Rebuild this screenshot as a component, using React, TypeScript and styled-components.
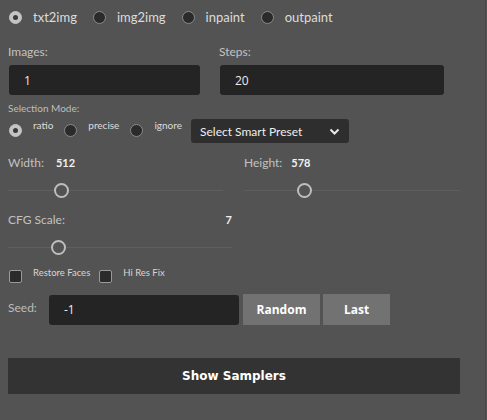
import React from 'react';
import styled, { createGlobalStyle } from 'styled-components';

const Global = createGlobalStyle`
  html, body {
    margin: 0;
    padding: 0;
    background: #535353;
  }
  body {
    font-family: 'Lato', 'Noto Sans', sans-serif;
    color: #d6d6d6;
  }
`;

const Styles = {
  Panel: styled.div`
    width: 486px;
    height: 420px;
    box-sizing: border-box;
    border-right: 1px solid #4a4a4a;
    padding: 0 8px;
    display: flex;
    flex-direction: column;
  `,
  ModeRow: styled.div`
    display: flex;
    align-items: center;
    height: 34px;
    gap: 16px;
    padding-left: 1px;
  `,
  RadioItem: styled.label<{ $small?: boolean }>`
    display: flex;
    align-items: ${(p) => (p.$small ? 'flex-start' : 'center')};
    gap: 11px;
    font-size: ${(p) => (p.$small ? '10px' : '13px')};
    color: #dcdcdc;
  `,
  Radio: styled.span<{ $checked?: boolean; $small?: boolean }>`
    width: 13px;
    height: 13px;
    box-sizing: border-box;
    border-radius: 50%;
    flex: none;
    margin-top: ${(p) => (p.$small ? '4px' : '0')};
    background: ${(p) => (p.$checked ? '#c4c4c4' : '#2b2b2b')};
    border: 1px solid ${(p) => (p.$checked ? '#c4c4c4' : '#8a8a8a')};
    display: flex;
    align-items: center;
    justify-content: center;

    &::after {
      content: '';
      display: ${(p) => (p.$checked ? 'block' : 'none')};
      width: 5px;
      height: 5px;
      border-radius: 50%;
      background: #3a3a3a;
    }
  `,
  SmallText: styled.span`
    line-height: 12px;
    margin-top: -1px;
  `,
  FieldRow: styled.div`
    display: flex;
    gap: 20px;
    margin-top: 11px;
  `,
  Field: styled.div<{ $width: number }>`
    width: ${(p) => p.$width}px;
    display: flex;
    flex-direction: column;
  `,
  Label: styled.div`
    font-size: 12px;
    color: #c2c2c2;
    line-height: 14px;
  `,
  Input: styled.div<{ $width?: number }>`
    height: 30px;
    box-sizing: border-box;
    width: ${(p) => (p.$width ? `${p.$width}px` : '100%')};
    background: #242424;
    border-radius: 3px;
    display: flex;
    align-items: center;
    padding-left: 15px;
    font-family: 'Open Sans', sans-serif;
    font-size: 12px;
    color: #ececec;
    margin-top: 6px;
    margin-left: 1px;
  `,
  SelectionLabel: styled.div`
    margin-top: 7px;
    font-size: 10px;
    color: #bdbdbd;
  `,
  PresetRow: styled.div`
    display: flex;
    align-items: flex-start;
    gap: 11px;
    margin-top: 6px;
    padding-left: 1px;
  `,
  Select: styled.div`
    width: 158px;
    height: 24px;
    box-sizing: border-box;
    margin-left: -2px;
    margin-top: -1px;
    background: #2e2e2e;
    border-radius: 3px;
    display: flex;
    align-items: center;
    justify-content: space-between;
    padding: 0 9px 0 9px;
    font-size: 12px;
    color: #eeeeee;
  `,
  SliderRow: styled.div<{ $gapTop: number }>`
    display: flex;
    gap: 21px;
    margin-top: ${(p) => p.$gapTop}px;
  `,
  SliderGroup: styled.div<{ $width: number }>`
    width: ${(p) => p.$width}px;
    display: flex;
    flex-direction: column;
  `,
  SliderHead: styled.div<{ $spread?: boolean; $gap?: number }>`
    display: flex;
    align-items: center;
    gap: ${(p) => p.$gap ?? 12}px;
    justify-content: ${(p) => (p.$spread ? 'space-between' : 'flex-start')};
    font-size: 12px;
    line-height: 14px;
    color: #c2c2c2;
  `,
  Value: styled.span`
    color: #f0f0f0;
    font-weight: 700;
    font-size: 11px;
  `,
  Track: styled.div`
    position: relative;
    height: 1px;
    background: #5e5e5e;
    margin-top: 20px;
  `,
  Thumb: styled.span`
    position: absolute;
    top: -7px;
    width: 15px;
    height: 15px;
    box-sizing: border-box;
    border-radius: 50%;
    border: 2px solid #bdbdbd;
    background: #535353;
  `,
  CheckRow: styled.div`
    display: flex;
    gap: 9px;
    margin-top: 19px;
    padding-left: 1px;
  `,
  CheckItem: styled.label`
    display: flex;
    gap: 11px;
    font-size: 9.5px;
    color: #d6d6d6;
    line-height: 12px;
  `,
  Box: styled.span`
    width: 13px;
    height: 13px;
    box-sizing: border-box;
    margin-top: 3px;
    border: 1px solid #9a9a9a;
    border-radius: 2px;
    background: #2b2b2b;
  `,
  SeedRow: styled.div`
    display: flex;
    align-items: center;
    margin-top: 11px;
  `,
  SeedLabel: styled.span`
    width: 40px;
    font-size: 12px;
    color: #bdbdbd;
    margin-top: -4px;
  `,
  Button: styled.button<{ $width: number }>`
    width: ${(p) => p.$width}px;
    height: 31px;
    border: none;
    background: #727272;
    color: #ffffff;
    font-family: 'Open Sans', sans-serif;
    font-weight: 700;
    font-size: 12px;
    margin-left: 3px;
    padding: 0;
  `,
  BigButton: styled.button`
    margin-top: 33px;
    width: 452px;
    height: 36px;
    border: none;
    background: #333333;
    color: #ffffff;
    font-family: 'DejaVu Sans', sans-serif;
    font-weight: 700;
    font-size: 12px;
  `,
};

const Chevron = () => (
  <svg width='11' height='7' viewBox='0 0 11 7'>
    <path d='M1.5 1.5 L5.5 5.5 L9.5 1.5' stroke='#e8e8e8' strokeWidth='2' fill='none' />
  </svg>
);

const Slider = ({ label, value, width, pos, gap, spread }: { label: string; value: string; width: number; pos: number; gap?: number; spread?: boolean }) => (
  <Styles.SliderGroup $width={width}>
    <Styles.SliderHead $spread={spread} $gap={gap}>
      <span>{label}</span>
      <Styles.Value>{value}</Styles.Value>
    </Styles.SliderHead>
    <Styles.Track>
      <Styles.Thumb style={{ left: pos - 7 }} />
    </Styles.Track>
  </Styles.SliderGroup>
);

const modes = ['txt2img', 'img2img', 'inpaint', 'outpaint'];
const selection = ['ratio', 'precise', 'ignore'];

const App = () => {
  return (
    <>
      <Global />
      <Styles.Panel>
        <Styles.ModeRow>
          {modes.map((m, i) => (
            <Styles.RadioItem key={m}>
              <Styles.Radio $checked={i === 0} />
              {m}
            </Styles.RadioItem>
          ))}
        </Styles.ModeRow>

        <Styles.FieldRow>
          <Styles.Field $width={191}>
            <Styles.Label>Images:</Styles.Label>
            <Styles.Input>1</Styles.Input>
          </Styles.Field>
          <Styles.Field $width={224}>
            <Styles.Label>Steps:</Styles.Label>
            <Styles.Input>20</Styles.Input>
          </Styles.Field>
        </Styles.FieldRow>

        <Styles.SelectionLabel>Selection Mode:</Styles.SelectionLabel>
        <Styles.PresetRow>
          {selection.map((s, i) => (
            <Styles.RadioItem key={s} $small>
              <Styles.Radio $checked={i === 0} $small />
              <Styles.SmallText>{s}</Styles.SmallText>
            </Styles.RadioItem>
          ))}
          <Styles.Select>
            <span>Select Smart Preset</span>
            <Chevron />
          </Styles.Select>
        </Styles.PresetRow>

        <Styles.SliderRow $gapTop={13}>
          <Slider label='Width:' value='512' width={215} pos={53} gap={12} />
          <Slider label='Height:' value='578' width={216} pos={60} gap={9} />
        </Styles.SliderRow>

        <Styles.SliderRow $gapTop={22}>
          <Slider label='CFG Scale:' value='7' width={224} pos={50} spread />
        </Styles.SliderRow>

        <Styles.CheckRow>
          <Styles.CheckItem>
            <Styles.Box />
            Restore Faces
          </Styles.CheckItem>
          <Styles.CheckItem>
            <Styles.Box />
            Hi Res Fix
          </Styles.CheckItem>
        </Styles.CheckRow>

        <Styles.SeedRow>
          <Styles.SeedLabel>Seed:</Styles.SeedLabel>
          <Styles.Input $width={190} style={{ marginTop: 0 }}>-1</Styles.Input>
          <Styles.Button $width={77} style={{ marginLeft: 4 }}>Random</Styles.Button>
          <Styles.Button $width={67}>Last</Styles.Button>
        </Styles.SeedRow>

        <Styles.BigButton>Show Samplers</Styles.BigButton>
      </Styles.Panel>
    </>
  );
};

export default App;
